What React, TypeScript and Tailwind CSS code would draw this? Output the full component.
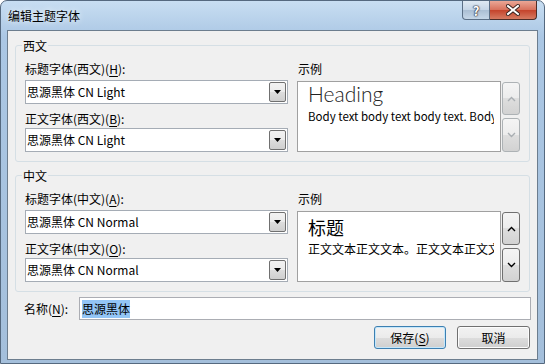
import React from "react";

function U({ c }: { c: string }) {
  return <span className="underline underline-offset-[2px]">{c}</span>;
}

function Combo({ value }: { value: string }) {
  return (
    <div className="flex h-[24px] w-[263px] items-center border border-[#a5acb5] bg-white">
      <span className="flex-1 pl-[1px] text-[12px] leading-[16px] whitespace-nowrap">{value}</span>
      <div className="mr-[1px] flex h-[20px] w-[17px] items-center justify-center rounded-[2px] border border-[#707070] bg-[linear-gradient(#f2f2f2,#ebebeb_50%,#dddddd_50%,#cfcfcf)]">
        <svg width="7" height="4" viewBox="0 0 7 4">
          <path d="M0 0h7L3.5 4z" fill="#000" />
        </svg>
      </div>
    </div>
  );
}

function ScrollBtn({ up, disabled, h }: { up?: boolean; disabled?: boolean; h: string }) {
  return (
    <div
      className={`flex w-[18px] items-center justify-center rounded-[3px] border bg-[linear-gradient(#f4f4f4,#ececec_50%,#dedede_50%,#d2d2d2)] ${h} ${
        disabled ? "border-[#adb2b5]" : "border-[#707070]"
      }`}
    >
      <svg width="9" height="6" viewBox="0 0 9 6">
        <path
          d={up ? "M1 5l3.5-3.5L8 5" : "M1 1l3.5 3.5L8 1"}
          fill="none"
          stroke={disabled ? "#a9aeb2" : "#000"}
          strokeWidth="1.4"
        />
      </svg>
    </div>
  );
}

type GroupProps = {
  title: string;
  label1: React.ReactNode;
  label2: React.ReactNode;
  value: string;
  heading: string;
  body: string;
  cjk?: boolean;
  disabled?: boolean;
  className?: string;
};

function Group({ title, label1, label2, value, heading, body, cjk, disabled, className }: GroupProps) {
  return (
    <div className={`relative ml-[7px] h-[117px] w-[515px] rounded-[3px] border border-[#d5dfe5] ${className ?? ""}`}>
      <span className="absolute -top-[8px] left-[6px] bg-[#f0f0f0] px-[1px] text-[12px] leading-[16px]">{title}</span>
      <div className="flex pl-[9px] pt-[15px]">
        <div className="flex w-[263px] flex-col">
          <div className="h-[16px] text-[12px] leading-[16px]">{label1}</div>
          <div className="mt-[3px]">
            <Combo value={value} />
          </div>
          <div className="mt-[7px] h-[16px] text-[12px] leading-[16px]">{label2}</div>
          <div className="mt-[1px]">
            <Combo value={value} />
          </div>
        </div>
        <div className="ml-[9px] flex flex-col">
          <div className="h-[16px] pl-[1px] text-[12px] leading-[16px]">示例</div>
          <div className="mt-[4px] flex gap-[1px]">
            <div className="h-[71px] w-[204px] overflow-hidden border border-[#a0a0a0] bg-white pl-[10px] pr-[8px]">
              <div className="w-[186px] overflow-hidden whitespace-nowrap">
                {cjk ? (
                  <>
                    <div className="pt-[4px] text-[18px] leading-[22px]">{heading}</div>
                    <div className="mt-[3px] text-[12px] leading-[16px]">{body}</div>
                  </>
                ) : (
                  <>
                    <div className="font-['Lato','Noto_Sans',sans-serif] text-[21px] font-light leading-[24px] text-[#222]">{heading}</div>
                    <div className="mt-[2px] text-[11.5px] leading-[16px]">{body}</div>
                  </>
                )}
              </div>
            </div>
            <div className="mt-[1px] flex flex-col gap-[3px]">
              <ScrollBtn up disabled={disabled} h="h-[33px]" />
              <ScrollBtn disabled={disabled} h="h-[34px]" />
            </div>
          </div>
        </div>
      </div>
    </div>
  );
}

export default function App() {
  return (
    <div className="flex h-[364px] w-[545px] flex-col rounded-t-[7px] border border-[#55697f] bg-[linear-gradient(180deg,#c8def2,#abc7e4_36px,#a4bfdb)] font-['Noto_Sans_CJK_SC','Noto_Sans',sans-serif] text-[#000]">
      <div className="flex h-[29px] justify-between">
        <div className="pl-[7px] pt-[7px] text-[12px] leading-[16px] [text-shadow:0_0_6px_#fff]">编辑主题字体</div>
        <div className="mr-[7px] flex h-[19px]">
          <div className="flex w-[28px] items-center justify-center rounded-bl-[4px] border border-t-0 border-[#5b6f86] bg-[linear-gradient(#dfe9f3,#c5d5e6_50%,#aabed3_50%,#c6d7e8)]">
            <span className="text-[13px] font-bold leading-[13px] text-white [text-shadow:0_0_1px_#223,0_0_1px_#223,0_0_2px_#223]">?</span>
          </div>
          <div className="flex w-[47px] items-center justify-center rounded-br-[4px] border border-l-0 border-t-0 border-[#4d2d28] bg-[linear-gradient(#eaa796,#d7705b_50%,#c4422a_50%,#d67b62)]">
            <svg width="14" height="12" viewBox="0 0 14 12">
              <path d="M2 2l10 8M12 2L2 10" stroke="#3a2420" strokeWidth="4" strokeLinecap="square" />
              <path d="M2 2l10 8M12 2L2 10" stroke="#fff" strokeWidth="2" strokeLinecap="square" />
            </svg>
          </div>
        </div>
      </div>

      <div className="ml-[6px] flex h-[330px] w-[531px] flex-col border border-[#6c7d8e] bg-[#f0f0f0]">
        <Group
          className="mt-[14px]"
          title="西文"
          label1={<>标题字体(西文)(<U c="H" />):</>}
          label2={<>正文字体(西文)(<U c="B" />):</>}
          value="思源黑体 CN Light"
          heading="Heading"
          body="Body text body text body text. Body text body text."
          disabled
        />
        <Group
          className="mt-[13px]"
          title="中文"
          label1={<>标题字体(中文)(<U c="A" />):</>}
          label2={<>正文字体(中文)(<U c="O" />):</>}
          value="思源黑体 CN Normal"
          heading="标题"
          body="正文文本正文文本。正文文本正文文本。"
          cjk
        />

        <div className="mt-[5px] flex items-center pl-[16px]">
          <span className="w-[55px] text-[12px] leading-[16px]">名称(<U c="N" />):</span>
          <div className="flex h-[23px] w-[452px] items-center border border-[#abadb3] bg-white pl-[2px]">
            <span className="bg-[#93c5f5] text-[12px] leading-[18px]">思源黑体</span>
          </div>
        </div>

        <div className="mt-[6px] flex justify-end gap-[11px] pr-[7px]">
          <button className="h-[23px] w-[72px] rounded-[3px] border border-[#3c7fb1] bg-[linear-gradient(#f2f2f2,#ebebeb_50%,#dddddd_50%,#cfcfcf)] text-[12px] leading-[16px] shadow-[inset_0_0_0_1px_#c4e7fb]">
            保存(<U c="S" />)
          </button>
          <button className="h-[23px] w-[73px] rounded-[3px] border border-[#707070] bg-[linear-gradient(#f2f2f2,#ebebeb_50%,#dddddd_50%,#cfcfcf)] text-[12px] leading-[16px] shadow-[inset_0_0_0_1px_#fcfcfc]">
            取消
          </button>
        </div>
      </div>
    </div>
  );
}
